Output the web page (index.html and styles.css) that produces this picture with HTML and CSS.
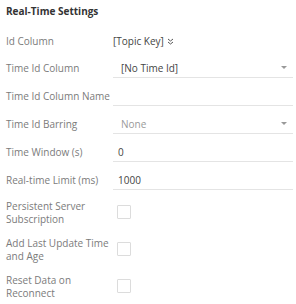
FILE: index.html
```html
<!DOCTYPE html>
<html>
<head>
<meta charset="utf-8">
<link rel="stylesheet" href="styles.css">
</head>
<body>
<div class="panel">
  <div class="title">Real-Time Settings</div>
  <div class="row id-row">
    <div class="label">Id Column</div>
    <div class="value">[Topic Key] <span class="chev"><svg width="7" height="7" viewBox="0 0 7 7"><path d="M1 1 L3.5 3 L6 1 M1 4 L3.5 6 L6 4" fill="none" stroke="#555" stroke-width="1"/></svg></span></div>
  </div>
  <div class="row">
    <div class="label">Time Id Column</div>
    <div class="field select"><span class="text">[No Time Id]</span><span class="caret"></span></div>
  </div>
  <div class="row">
    <div class="label">Time Id Column Name</div>
    <div class="field"></div>
  </div>
  <div class="row">
    <div class="label">Time Id Barring</div>
    <div class="field select"><span class="text muted">None</span><span class="caret"></span></div>
  </div>
  <div class="row">
    <div class="label">Time Window (s)</div>
    <div class="field"><span class="text">0</span></div>
  </div>
  <div class="row">
    <div class="label">Real-time Limit (ms)</div>
    <div class="field"><span class="text">1000</span></div>
  </div>
  <div class="crow">
    <div class="label">Persistent Server Subscription</div>
    <div class="cbox"></div>
  </div>
  <div class="crow">
    <div class="label">Add Last Update Time and Age</div>
    <div class="cbox"></div>
  </div>
  <div class="crow">
    <div class="label">Reset Data on Reconnect</div>
    <div class="cbox"></div>
  </div>
</div>
</body>
</html>
```
FILE: styles.css
```css
html, body {
  margin: 0;
  padding: 0;
  background: #ffffff;
}
body {
  font-family: "Open Sans", "Liberation Sans", sans-serif;
  font-size: 10px;
  color: #444;
}
.panel {
  padding: 4px 3px 0 6px;
}
.title {
  font-weight: bold;
  font-size: 10px;
  line-height: 15px;
  color: #333;
  height: 24px;
}
.row {
  display: grid;
  grid-template-columns: 107px 1fr;
  align-items: center;
  height: 28px;
}
.id-row {
  height: 26px;
}
.label {
  color: #7b7b7b;
  line-height: 12px;
}
.value {
  color: #444;
  display: flex;
  align-items: center;
  gap: 3px;
}
.chev {
  display: inline-flex;
}
.field {
  height: 19px;
  border-bottom: 1px solid #e4e4e4;
  display: flex;
  align-items: center;
  justify-content: space-between;
  padding: 0 6px 0 5px;
}
.field.select {
  padding-left: 8px;
}
.text {
  color: #444;
}
.text.muted {
  color: #9a9a9a;
}
.caret {
  width: 0;
  height: 0;
  border-left: 3px solid transparent;
  border-right: 3px solid transparent;
  border-top: 3px solid #999;
}
.crow {
  display: grid;
  grid-template-columns: 111px 1fr;
  align-items: center;
  height: 37px;
}
.crow .label {
  line-height: 13px;
}
.cbox {
  width: 12px;
  height: 12px;
  border: 1px solid #dcdcdc;
  border-radius: 1px;
  margin-top: -2px;
}
```
